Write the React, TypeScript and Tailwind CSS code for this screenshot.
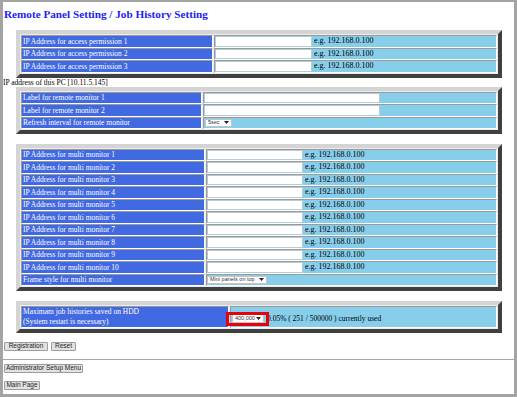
import type { ReactNode } from "react";

const frame =
  "ml-[13px] w-[486px] border-4 border-t-[#d4d4d4] border-l-[#d4d4d4] border-r-[#404040] border-b-[#404040] bg-[#ececec] p-px";
const inset = "border border-t-[#9a9a9a] border-l-[#9a9a9a] border-b-white border-r-white";

function Arrow() {
  return (
    <svg width="5" height="3" viewBox="0 0 5 3" className="shrink-0">
      <path d="M0 0h5L2.5 3z" fill="#222" />
    </svg>
  );
}

function Select({ text, className }: { text: string; className: string }) {
  return (
    <div
      className={`h-[8px] bg-white border border-[#c4c4c4] flex items-center justify-between pl-[2px] pr-[2px] font-['Liberation_Sans',sans-serif] text-[5.5px] leading-none text-[#333] ${className}`}
    >
      <span>{text}</span>
      <Arrow />
    </div>
  );
}

function Input({ className }: { className: string }) {
  return <div className={`h-full bg-white border border-[#b4ccd8] ${className}`} />;
}

function Row({ label, labelW, children }: { label: string; labelW: string; children?: ReactNode }) {
  return (
    <div className="flex h-[12.5px] gap-px">
      <div className={`${labelW} shrink-0 bg-[#4169e1] text-white ${inset} pl-px flex items-center text-[7.5px] leading-none whitespace-nowrap`}>
        {label}
      </div>
      <div className={`flex-1 bg-[#87ceeb] ${inset} flex items-center text-[8px] leading-none whitespace-nowrap`}>
        {children}
      </div>
    </div>
  );
}

function Btn({ text, className }: { text: string; className: string }) {
  return (
    <div
      className={`h-[9px] bg-[#e2e2e2] border border-[#9c9c9c] rounded-[1px] flex items-center justify-center font-['Liberation_Sans',sans-serif] text-[6.5px] leading-none text-[#222] whitespace-nowrap ${className}`}
    >
      {text}
    </div>
  );
}

export default function App() {
  const multi = [1, 2, 3, 4, 5, 6, 7, 8, 9, 10];
  return (
    <div className="w-[517px] h-[397px] overflow-hidden bg-white border-[3px] border-t-2 border-[#a4a4a4] font-['Liberation_Serif',serif] text-black">
      <h1 className="mt-[5px] pl-px text-[11.2px] leading-[14px] font-bold text-[#1e1ef0] whitespace-nowrap">
        Remote Panel Setting / Job History Setting
      </h1>

      <div className={`${frame} mt-[9px]`}>
        {[1, 2, 3].map((n) => (
          <Row key={n} label={`IP Address for access permission ${n}`} labelW="w-[192px]">
            <Input className="w-[97px]" />
            <span className="ml-[2px]">e.g. 192.168.0.100</span>
          </Row>
        ))}
      </div>

      <div className="h-[9px] text-[7.5px] leading-[9px] whitespace-nowrap">IP address of this PC [10.11.5.145]</div>

      <div className={frame}>
        <Row label="Label for remote monitor 1" labelW="w-[181px]">
          <Input className="w-[176px]" />
        </Row>
        <Row label="Label for remote monitor 2" labelW="w-[181px]">
          <Input className="w-[176px]" />
        </Row>
        <Row label="Refresh interval for remote monitor" labelW="w-[181px]">
          <Select text="5sec" className="ml-px w-[27px]" />
        </Row>
      </div>

      <div className={`${frame} mt-[9.5px]`}>
        {multi.map((n) => (
          <Row key={n} label={`IP Address for multi monitor ${n}`} labelW="w-[184px]">
            <Input className="w-[96px]" />
            <span className="ml-[2px]">e.g. 192.168.0.100</span>
          </Row>
        ))}
        <Row label="Frame style for multi monitor" labelW="w-[184px]">
          <Select text="Mini panels on top" className="w-[60px]" />
        </Row>
      </div>

      <div className={`${frame} mt-[10px]`}>
        <div className="flex h-[22px] gap-px">
          <div className={`w-[208px] shrink-0 bg-[#4169e1] text-white ${inset} pl-px flex flex-col justify-center text-[7.5px] leading-[10px] whitespace-nowrap`}>
            <span>Maximam job histories saved on HDD</span>
            <span>(System restart is necessary)</span>
          </div>
          <div className={`relative flex-1 bg-[#87ceeb] ${inset} flex items-center pt-[3px] text-[7.5px] leading-none whitespace-nowrap`}>
            <Select text="400,000" className="ml-px w-[32px] h-[9px]" />
            <span className="ml-[3px]">0.05% ( 251 / 500000 ) currently used</span>
            <div className="absolute left-[-5px] top-[5px] w-[43px] h-[14px] border-[3px] border-[#e8000c]" />
          </div>
        </div>
      </div>

      <div className="mt-[9px] ml-px flex gap-[3px]">
        <Btn text="Registration" className="w-[44px]" />
        <Btn text="Reset" className="w-[25px]" />
      </div>

      <div className="mt-[8px] h-px bg-[#a8a8a8]" />

      <Btn text="Administrator Setup Menu" className="mt-[3.5px] ml-px w-[79px]" />
      <Btn text="Main Page" className="mt-[8.5px] ml-px w-[36px]" />
    </div>
  );
}
